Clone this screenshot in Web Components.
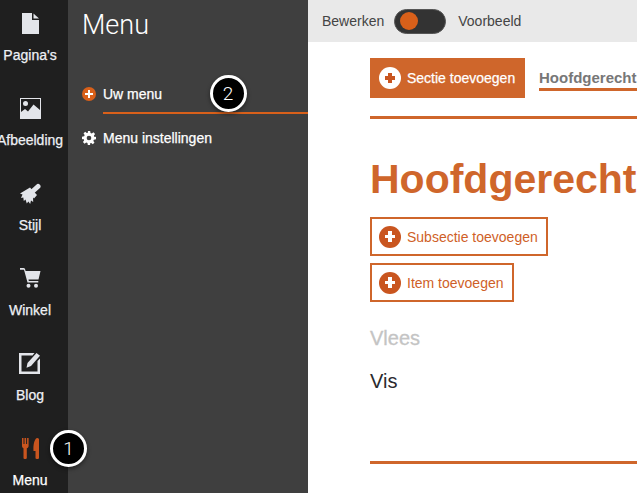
<!DOCTYPE html>
<html><head><meta charset="utf-8"><style>
html,body{margin:0;padding:0;height:493px;overflow:hidden;background:#fff}
body{font-family:"Liberation Sans",Arial,sans-serif}
app-shell{width:637px;height:493px}
</style></head><body>
<app-shell>
  <nav-rail slot="rail">
    <rail-item label="Pagina's"><svg viewBox="0 0 17 21" width="17" height="21"><path fill="#e3e5ea" d="M0 0h10v7h7v14H0z"/><path fill="#e3e5ea" d="M11.500 0.500L17 5.500h-5.500z"/></svg></rail-item>
    <rail-item label="Afbeelding"><svg viewBox="0 0 21 21" width="21" height="21"><path fill="#e3e5ea" fill-rule="evenodd" d="M0 0h21v21H0zM1 1v13l4-3 3 2.500 5.500-7L20 12V1z"/><circle cx="5.500" cy="5.500" r="2.500" fill="#e3e5ea"/></svg></rail-item>
    <rail-item label="Stijl"><svg viewBox="0 0 21 21" width="21" height="21"><path stroke="#e3e5ea" stroke-width="5" stroke-linecap="round" fill="none" d="M18 3.500L13 8"/><path fill="#e3e5ea" d="M10 4.500L17 12L14 15.500L13 14.500L13.200 19L11 17.500L10.200 21L8.400 18.500L6.800 20.500L5.500 16.500L3.800 18L3.300 14.500L1 15L2.500 11.500L0 10.500z"/></svg></rail-item>
    <rail-item label="Winkel"><svg viewBox="0 0 21 20" width="21" height="20"><path fill="#e3e5ea" d="M0 0h3.500c.8 0 1.200.4 1.500 1l.6 2H20.500l-2 8.500H8.500l.3 1.500h9.500v1.500H7.500L4 1.800H0z"/><circle cx="8.500" cy="17.800" r="2" fill="#e3e5ea"/><circle cx="16" cy="17.800" r="2" fill="#e3e5ea"/></svg></rail-item>
    <rail-item label="Blog"><svg viewBox="0 0 22 21" width="22" height="21"><path fill="#e3e5ea" fill-rule="evenodd" d="M0 0h15.500l-2 2.500H2.500v16h16V8l2.500-2.500V21H0z"/><path fill="#e3e5ea" d="M17.500 0l3.500 2.800-9 10.200-4.500 1.700 1-4.700z"/></svg></rail-item>
    <rail-item label="Menu" active><svg viewBox="0 0 17 21" width="17" height="21"><path fill="#c9551f" d="M0 0h1.500v6h1V0h1.600v6h1V0h1.500v8c0 1.200-.9 2-1.800 2.300V20c0 1.300-3.300 1.300-3.300 0V10.300C.9 10 0 9.200 0 8z"/><path fill="#c9551f" d="M15.200 0c1.300.1 1.800.8 1.800 1.500V20c0 1.300-3.500 1.300-3.500 0v-7h-2C11 7 12.500.5 15.200 0z"/></svg></rail-item>
  </nav-rail>
  <side-panel slot="panel" heading="Menu">
    <panel-link active label="Uw menu"><plus-badge size="14" style="--in:21.500%;--th:42%"></plus-badge></panel-link>
    <panel-link label="Menu instellingen"><svg viewBox="0 0 24 24" width="14" height="14"><path fill="#fff" fill-rule="evenodd" d="M10 0h4l.6 3.400 2.200.9 2.800-2 2.800 2.800-2 2.800.9 2.200L24 10v4l-3.700.9-.9 2.200 2 2.800-2.800 2.800-2.800-2-2.200.9L14 24h-4l-.6-3.400-2.200-.9-2.800 2-2.800-2.800 2-2.800-.9-2.200L0 14v-4l3.700-.9.900-2.200-2-2.800 2.800-2.800 2.800 2 2.200-.9zM12 8a4 4 0 1 0 0 8 4 4 0 0 0 0-8z"/></svg></panel-link>
  </side-panel>
  <main-area slot="main">
    <mode-bar></mode-bar>
    <section-tabs></section-tabs>
    <menu-section></menu-section>
  </main-area>
  <call-out slot="over" style="left:50px;top:430px">1</call-out>
  <call-out slot="over" style="left:209.500px;top:75px">2</call-out>
</app-shell>
<script>
const def=(name,css,html)=>customElements.define(name,class extends HTMLElement{
  connectedCallback(){ if(this.shadowRoot)return; const r=this.attachShadow({mode:'open'});
    r.innerHTML=`<style>${css}</style>`+(typeof html==='function'?html(this):html); }
});
def('app-shell',`:host{display:flex;position:relative;overflow:hidden}`,`<slot name="rail"></slot><slot name="panel"></slot><slot name="main"></slot><slot name="over"></slot>`);
def('nav-rail',`:host{display:flex;flex-direction:column;width:68px;height:493px;flex:none;background:#1f1f1f;overflow:hidden;box-sizing:border-box;padding-right:8px}`,`<slot></slot>`);
def('rail-item',`:host{display:flex;flex-direction:column;align-items:center;height:85px;flex:none;position:relative;box-sizing:border-box;padding-top:12px}
 .i{height:22px;display:flex;align-items:center;justify-content:center}
 .l{margin-top:13px;font-size:14px;line-height:17px;font-weight:400;color:#eef0f5;white-space:nowrap;-webkit-text-stroke:.25px currentColor}
 :host([active]) .l{color:#fff}`,
 h=>`<div class="i"><slot></slot></div><div class="l">${h.getAttribute('label')}</div>`);
def('side-panel',`:host{display:block;width:240px;height:493px;flex:none;background:#3f3f3f;box-sizing:border-box;padding:10px 0 0 14px}
 h1{margin:0 0 45px;font-family:Roboto,"Liberation Sans",sans-serif;font-size:27px;line-height:30px;font-weight:300;color:#fff}`,
 h=>`<h1>${h.getAttribute('heading')}</h1><slot></slot>`);
def('panel-link',`:host{display:flex;align-items:flex-start;height:44px}
 .i{width:21px;flex:none;height:18px;display:flex;align-items:center}
 .t{flex:1;font-size:14px;line-height:18px;color:#fff;-webkit-text-stroke:.25px currentColor;white-space:nowrap}
 :host([active]) .t{border-bottom:2px solid #d9601a;height:29px;box-sizing:border-box}`,
 h=>`<div class="i"><slot></slot></div><div class="t">${h.getAttribute('label')}</div>`);
def('plus-badge',`:host{display:inline-flex;border-radius:50%;background:var(--bg,#d9601a);flex:none;position:relative}
 i{position:absolute;background:var(--fg,#fff);left:var(--in,26%);right:var(--in,26%);top:var(--th,41%);bottom:var(--th,41%)}
 b{position:absolute;background:var(--fg,#fff);top:var(--in,26%);bottom:var(--in,26%);left:var(--th,41%);right:var(--th,41%)}`,
 h=>{const s=h.getAttribute('size');h.style.width=s+'px';h.style.height=s+'px';return `<i></i><b></b>`});
def('main-area',`:host{display:flex;flex-direction:column;flex:1;min-width:0;height:493px;background:#fff;overflow:hidden}`,`<slot></slot>`);
def('mode-bar',`:host{display:flex;align-items:center;height:42px;flex:none;background:#e9e9e9;padding-left:14px;font-size:14px;color:#444;box-sizing:border-box}
 .sw{width:52px;height:25px;border-radius:13px;background:#333;margin:0 12px 0 10px;position:relative;box-sizing:border-box;border:1px solid #555}
 .k{position:absolute;left:5px;top:2.500px;width:18px;height:18px;border-radius:50%;background:#d9601a}`,
 `<span>Bewerken</span><div class="sw"><div class="k"></div></div><span>Voorbeeld</span>`);
def('section-tabs',`:host{display:flex;align-items:flex-start;margin-left:62px;padding-top:16px;height:77px;flex:none;box-sizing:border-box;border-bottom:3px solid #cf662b;width:400px;white-space:nowrap}
 .b{display:flex;align-items:center;height:40px;width:155px;box-sizing:border-box;padding-left:9px;background:#cf662b;color:#fff;font-size:14px;-webkit-text-stroke:.25px currentColor;flex:none}
 .b span{margin-left:6px}
 plus-badge{--bg:#fff;--fg:#c9551f}
 .t{margin-left:14px;margin-top:11px;height:22px;font-size:15px;line-height:18px;font-weight:700;color:#777;border-bottom:3px solid #cf662b;box-sizing:border-box;width:200px}`,
 `<div class="b"><plus-badge size="22"></plus-badge><span>Sectie toevoegen</span></div><div class="t">Hoofdgerecht</div>`);
def('menu-section',`:host{display:block;margin-left:62px;width:400px;height:345px;box-sizing:border-box;border-bottom:3px solid #cf662b;white-space:nowrap;position:relative}
 h2{margin:0;padding-top:33px;font-size:41px;line-height:54px;font-weight:700;color:#cf662b}
 .a{display:flex;flex-direction:column;align-items:flex-start;gap:7px;margin-top:11px}
 .o{display:flex;align-items:center;height:39px;box-sizing:border-box;border:2px solid #cf662b;padding:0 8px 0 7px;color:#cf5f28;font-size:14px}
 .o span{margin-left:6px}
 plus-badge{--bg:#c9551f}
 .v{margin-top:23px;font-size:20px;line-height:26px;color:#c4c4c4;-webkit-text-stroke:.3px currentColor}
 .w{margin-top:17px;font-size:20px;line-height:26px;color:#2a2a2e}`,
 `<h2>Hoofdgerecht</h2><div class="a"><div class="o"><plus-badge size="22"></plus-badge><span>Subsectie toevoegen</span></div><div class="o"><plus-badge size="22"></plus-badge><span>Item toevoegen</span></div></div><div class="v">Vlees</div><div class="w">Vis</div>`);
def('call-out',`:host{position:absolute;display:flex;align-items:center;justify-content:center;width:37px;height:37px;box-sizing:border-box;border-radius:50%;background:#000;border:3px solid #fff;color:#fff;font-family:Roboto,"Liberation Sans",sans-serif;font-weight:300;font-size:19px;box-shadow:0 2px 4px rgba(0,0,0,.45)}`,`<slot></slot>`);
</script>
</body></html>
